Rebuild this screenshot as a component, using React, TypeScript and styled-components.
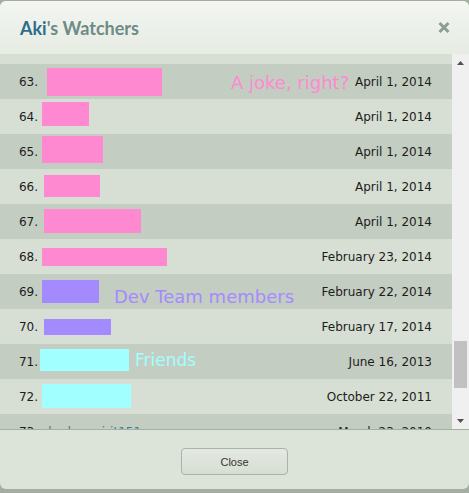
import React, { useLayoutEffect, useRef } from "react"
import styled, { createGlobalStyle } from "styled-components"

const GlobalStyle = createGlobalStyle`
  html, body {
    margin: 0;
    padding: 0;
    background: #a3ada2;
  }
  body {
    font-family: "DejaVu Sans", Verdana, sans-serif;
  }
`

const Dialog = styled.div`
  width: 469px;
  height: 488px;
  margin-top: 1px;
  border-radius: 6px;
  overflow: hidden;
  display: flex;
  flex-direction: column;
  background: #dce4da;
`

const Header = styled.div`
  height: 53px;
  flex: none;
  display: flex;
  align-items: center;
  justify-content: space-between;
  padding: 0 19px 0 20px;
  background: linear-gradient(#f3f6f1, #e6ebe3);
`

const Title = styled.h1`
  margin: 0;
  font-family: Lato, "Liberation Sans", sans-serif;
  font-weight: 700;
  font-size: 18px;
  color: #6e8b87;
`

const TitleName = styled.span`
  color: #2c6e8c;
`

const CloseIcon = styled.button`
  border: 0;
  padding: 0;
  background: none;
  width: 12px;
  height: 13px;
  margin-bottom: 1px;
  display: flex;
  cursor: pointer;
`

const Body = styled.div`
  height: 375px;
  flex: none;
  display: flex;
`

const List = styled.div`
  flex: 1;
  overflow: hidden;
  background: #d7dfd4;
`

const ScrollBar = styled.div`
  width: 17px;
  flex: none;
  display: flex;
  flex-direction: column;
  background: #f0f0f0;
`

const ArrowButton = styled.div`
  height: 17px;
  flex: none;
  display: flex;
  align-items: center;
  justify-content: center;
`

const Track = styled.div`
  flex: 1;
  display: flex;
  flex-direction: column;
  align-items: center;
`

const Thumb = styled.div`
  width: 13px;
  flex: none;
  background: #c1c1c1;
`

const Row = styled.div<{ $odd: boolean }>`
  height: 35px;
  display: flex;
  align-items: center;
  padding-right: 20px;
  font-size: 12px;
  color: #1c1c1c;
  background: ${(p) => (p.$odd ? "#c4cdc2" : "#d7dfd4")};
`

const Num = styled.span`
  width: 38px;
  flex: none;
  text-align: right;
`

const Name = styled.a`
  margin-left: 4px;
  color: #2f7f9c;
  text-decoration: none;
`

const Mask = styled.span<{ $dx: number; $top: number; $w: number; $h: number; $color: string }>`
  align-self: flex-start;
  flex: none;
  margin-left: ${(p) => p.$dx}px;
  margin-top: ${(p) => p.$top}px;
  width: ${(p) => p.$w}px;
  height: ${(p) => p.$h}px;
  background: ${(p) => p.$color};
`

const Note = styled.span<{ $gap: number; $top: number; $size: number; $color: string }>`
  align-self: flex-start;
  flex: none;
  margin-left: ${(p) => p.$gap}px;
  margin-top: ${(p) => p.$top}px;
  font-size: ${(p) => p.$size}px;
  line-height: ${(p) => p.$size}px;
  color: ${(p) => p.$color};
  white-space: nowrap;
`

const DateText = styled.span`
  margin-left: auto;
  white-space: nowrap;
`

const Footer = styled.div`
  flex: 1;
  border-top: 1px solid #a4aea3;
  display: flex;
  justify-content: center;
  align-items: flex-start;
  padding-top: 18px;
`

const Button = styled.button`
  width: 107px;
  height: 27px;
  border: 1px solid #a9b3a8;
  border-radius: 4px;
  background: linear-gradient(#e4e9e1, #d6ded3);
  font-family: "Liberation Sans", Arial, sans-serif;
  font-size: 11px;
  color: #333;
  cursor: pointer;
`

const PINK = "#ff89d1"
const PURPLE = "#a38bff"
const CYAN = "#a1ffff"

type Watcher = {
  name: string
  date: string
  mask?: { dx: number; top: number; w: number; h: number; color: string }
  note?: { text: string; gap: number; top: number; size: number; color: string }
}

const visible: Watcher[] = [
  { name: "", date: "April 1, 2014", mask: { dx: 9, top: 4, w: 115, h: 28, color: PINK }, note: { text: "A joke, right?", gap: 69, top: 10, size: 18, color: PINK } },
  { name: "", date: "April 1, 2014", mask: { dx: 4, top: 3, w: 47, h: 24, color: PINK } },
  { name: "", date: "April 1, 2014", mask: { dx: 4, top: 2, w: 61, h: 27, color: PINK } },
  { name: "", date: "April 1, 2014", mask: { dx: 6, top: 6, w: 56, h: 22, color: PINK } },
  { name: "", date: "April 1, 2014", mask: { dx: 6, top: 5, w: 97, h: 24, color: PINK } },
  { name: "", date: "February 23, 2014", mask: { dx: 4, top: 9, w: 125, h: 18, color: PINK } },
  { name: "", date: "February 22, 2014", mask: { dx: 4, top: 6, w: 57, h: 23, color: PURPLE }, note: { text: "Dev Team members", gap: 15, top: 14, size: 18, color: PURPLE } },
  { name: "", date: "February 17, 2014", mask: { dx: 6, top: 10, w: 67, h: 16, color: PURPLE } },
  { name: "", date: "June 16, 2013", mask: { dx: 2, top: 5, w: 89, h: 22, color: CYAN }, note: { text: "Friends", gap: 6, top: 8, size: 17, color: CYAN } },
  { name: "", date: "October 22, 2011", mask: { dx: 4, top: 5, w: 89, h: 24, color: CYAN } },
  { name: "shadowspirit151", date: "March 23, 2010" },
]

const months = ["January", "February", "March", "April", "May", "June", "July", "August", "September", "October", "November", "December"]

const watchers: Watcher[] = Array.from({ length: 78 }, (_, i) => {
  const n = i + 1
  if (n >= 63 && n <= 73) return visible[n - 63]
  return {
    name: "watcher" + (100 + n * 7),
    date: `${months[(n * 5) % 12]} ${(n % 27) + 1}, ${n < 63 ? 2014 : 2009}`,
  }
})

const ROW_H = 35
const VIEW_H = 375
const SCROLL_TOP = 2160
const TRACK_H = VIEW_H - 34

export default function App() {
  const listRef = useRef<HTMLDivElement>(null)

  useLayoutEffect(() => {
    if (listRef.current) listRef.current.scrollTop = SCROLL_TOP
  }, [])

  const contentH = watchers.length * ROW_H
  const thumbH = Math.round((VIEW_H / contentH) * TRACK_H)
  const thumbTop = Math.round((SCROLL_TOP / (contentH - VIEW_H)) * (TRACK_H - thumbH))

  return (
    <>
      <GlobalStyle />
      <Dialog>
        <Header>
          <Title>
            <TitleName>Aki</TitleName>'s Watchers
          </Title>
          <CloseIcon aria-label="close">
            <svg width="12" height="13" viewBox="0 0 12 13">
              <path d="M1.5 2 L10.5 11 M10.5 2 L1.5 11" stroke="#8d9c94" strokeWidth="3" />
            </svg>
          </CloseIcon>
        </Header>
        <Body>
          <List ref={listRef}>
            {watchers.map((w, i) => (
              <Row key={i} $odd={i % 2 === 0}>
                <Num>{i + 1}.</Num>
                {w.mask ? (
                  <Mask $dx={w.mask.dx} $top={w.mask.top} $w={w.mask.w} $h={w.mask.h} $color={w.mask.color} />
                ) : (
                  <Name href="#">{w.name}</Name>
                )}
                {w.note && (
                  <Note $gap={w.note.gap} $top={w.note.top} $size={w.note.size} $color={w.note.color}>
                    {w.note.text}
                  </Note>
                )}
                <DateText>{w.date}</DateText>
              </Row>
            ))}
          </List>
          <ScrollBar>
            <ArrowButton>
              <svg width="7" height="4" viewBox="0 0 7 4">
                <path d="M0 4 L3.5 0 L7 4 Z" fill="#505050" />
              </svg>
            </ArrowButton>
            <Track>
              <Thumb style={{ marginTop: thumbTop, height: thumbH }} />
            </Track>
            <ArrowButton>
              <svg width="7" height="4" viewBox="0 0 7 4">
                <path d="M0 0 L7 0 L3.5 4 Z" fill="#505050" />
              </svg>
            </ArrowButton>
          </ScrollBar>
        </Body>
        <Footer>
          <Button>Close</Button>
        </Footer>
      </Dialog>
    </>
  )
}
